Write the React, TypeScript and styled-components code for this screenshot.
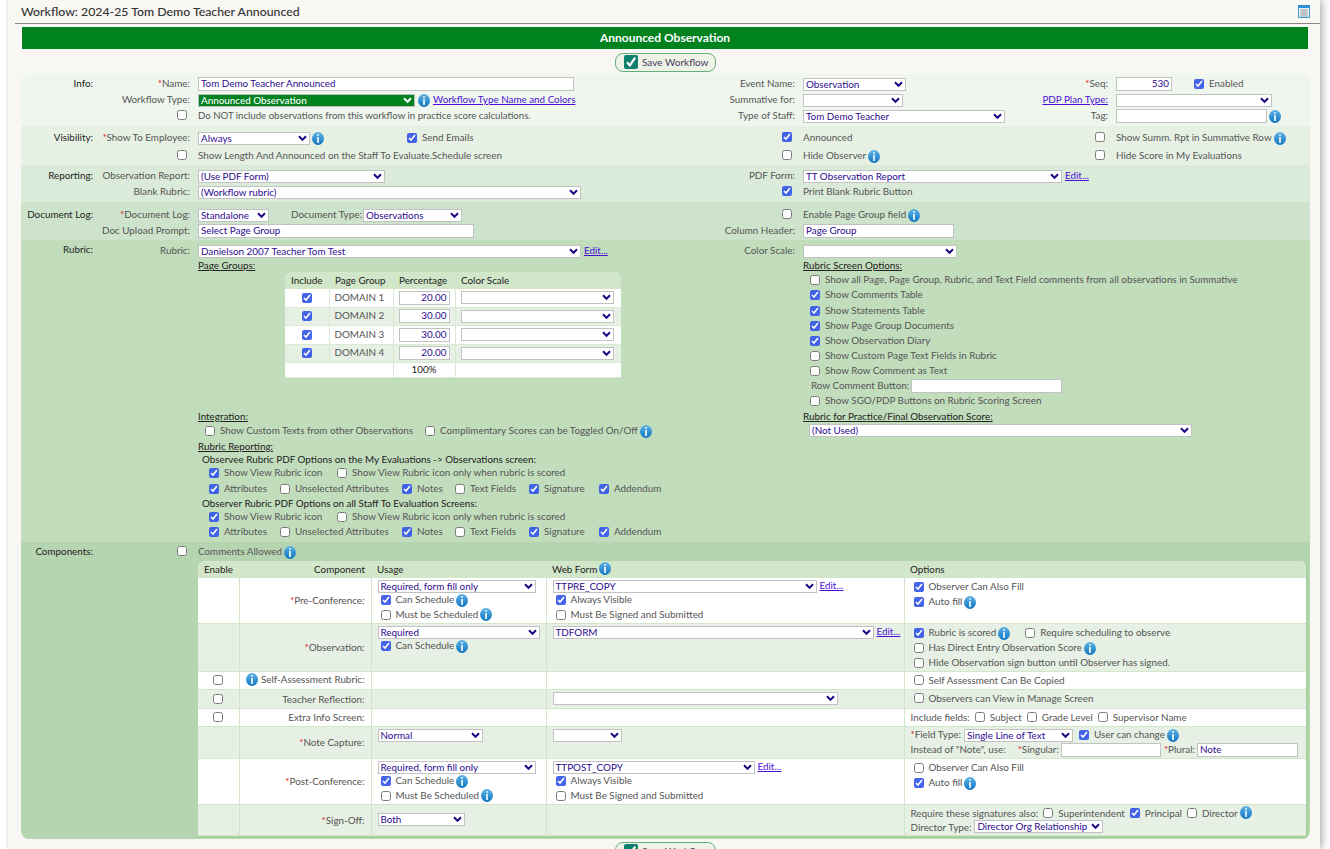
import React from "react";
import styled, { createGlobalStyle } from "styled-components";

const Global = createGlobalStyle`
  html, body { margin: 0; padding: 0; height: 849px; overflow: hidden; background: #fff; }
  body { font-family: Lato, "Liberation Sans", sans-serif; font-size: 9.85px; color: #555; }
`;

const Page = styled.div`
  margin-left: 8px; width: 1312px; height: 849px; background: #f8f7f3;
  box-shadow: 3px 0 7px rgba(0,0,0,.28), -1px 0 3px rgba(0,0,0,.06); overflow: hidden; padding-left: 13px; box-sizing: border-box;
`;
const TitleBar = styled.div`
  display: flex; align-items: center; justify-content: space-between; height: 23px;
  margin: 0 -2px 0 -6px; padding: 0 12px 0 6px; border-bottom: 1px solid #888; box-sizing: content-box;
  font-size: 12.3px; color: #333; font-weight: 500;
`;
const GreenHeader = styled.div`
  margin: 3px 0 0 1px; width: 1286px; height: 22px; background: #00821e; color: #fff; font-weight: 700; font-size: 12px;
  display: flex; align-items: center; justify-content: center; padding-bottom: 1px; box-sizing: border-box;
`;
const SaveRow = styled.div`display: flex; justify-content: center; margin: 4px 0 2px; width: 1289px;`;
const SaveButton = styled.button`
  display: inline-flex; align-items: center; gap: 4px; width: 101px; height: 19px; border: 1px solid #68ad7c; border-radius: 8px;
  background: #eef3e6; color: #443a63; font: inherit; font-size: 10px; padding: 0 0 1px 8px; flex: none;
`;
const Panel = styled.div`width: 1289px; border-radius: 8px; overflow: hidden;`;
const Section = styled.section<{ $bg: string; $pt: number; $pb: number }>`
  display: grid; grid-template-columns: 72px 105px 532px 73px 239px 74px 194px;
  background: ${p => p.$bg}; padding: ${p => p.$pt}px 0 ${p => p.$pb}px; align-items: center;
`;
const Sec = styled.div<{ $top?: boolean }>`
  text-align: right; color: #222; white-space: nowrap; align-self: ${p => (p.$top ? "start" : "center")};
  padding-bottom: 2px;
`;
const Lab = styled.div<{ $pr?: number; $top?: boolean }>`
  display: flex; align-items: center; justify-content: flex-end; padding: 0 ${p => p.$pr ?? 8}px 2px 0; white-space: nowrap;
  align-self: ${p => (p.$top ? "start" : "center")}; height: ${p => (p.$top ? "16px" : "auto")}; box-sizing: border-box;
`;
const Cell = styled.div<{ $h: number; $span?: string }>`
  display: flex; align-items: center; height: ${p => p.$h}px; white-space: nowrap; min-width: 0;
  grid-column: ${p => p.$span ?? "auto"};
`;
const Col = styled.div<{ $span?: string }>`grid-column: ${p => p.$span ?? "auto"}; align-self: start; min-width: 0;`;
const Line = styled.div<{ $h?: number; $ml?: number; $mt?: number }>`
  display: flex; align-items: center; height: ${p => p.$h ?? 15}px; margin-left: ${p => p.$ml ?? 0}px;
  margin-top: ${p => p.$mt ?? 0}px; white-space: nowrap;
`;
const Txt = styled.span<{ $fs?: number }>`
  display: block; margin-bottom: 2px; ${p => (p.$fs ? `font-size: ${p.$fs}px;` : "")}
`;
const Heading = styled.div<{ $h: number; $mt?: number }>`
  height: ${p => p.$h}px; line-height: ${p => p.$h - 1}px; margin-top: ${p => p.$mt ?? 0}px; color: #222; text-decoration: underline;
`;
const SubHead = styled.div<{ $h: number }>`height: ${p => p.$h}px; line-height: ${p => p.$h - 1}px; margin-left: 4px; color: #222;`;
const Star = styled.span`color: #e01b1b;`;
const A = styled.a`color: #4a10d8; text-decoration: underline; margin-left: 3px;`;

const SelBox = styled.div<{ $w: number; $green?: boolean }>`
  position: relative; width: ${p => p.$w}px; height: 13px; flex: none; box-sizing: border-box; padding: 0 14px 0 2px;
  border: 1px solid ${p => (p.$green ? "#bdbdbd" : "#c2c2c2")};
  background: ${p => (p.$green ? "#00821e" : "#fff")}; color: ${p => (p.$green ? "#fff" : "#2c0a8f")}; font-weight: ${p => (p.$green ? 500 : 400)};
  line-height: 10px; text-align: left; white-space: nowrap;
`;
const Chevron = styled.svg`position: absolute; right: 2px; top: 2px; pointer-events: none;`;
const TextIn = styled.input<{ $w: number; $right?: boolean }>`
  width: ${p => p.$w}px; height: 14px; box-sizing: border-box; border: 1px solid #c2c2c2; padding: 0 2px 2px; margin: 0; font: inherit; flex: none;
  color: #2c0a8f; background: #fff; text-align: ${p => (p.$right ? "right" : "left")}; border-radius: 0;
`;
const Box = styled.input`width: 10px; height: 10px; margin: 0; accent-color: #3a5ce8; flex: none; opacity: .95;`;
const CheckWrap = styled.label<{ $w?: number; $mr?: number }>`
  display: inline-flex; align-items: center; gap: 5px; flex: none; margin-right: ${p => p.$mr ?? 0}px;
  width: ${p => (p.$w ? `${p.$w}px` : "auto")};
`;
const InfoDot = styled.svg<{ $ml?: number }>`flex: none; margin-left: ${p => p.$ml ?? 2}px;`;
const Spacer = styled.span<{ $w: number }>`display: inline-block; width: ${p => p.$w}px; flex: none;`;

const Sel = ({ w, v = "", green }: { w: number; v?: string; green?: boolean }) => (
  <SelBox $w={w} $green={green} role="combobox">
    {v}
    <Chevron width="9" height="7" viewBox="0 0 9 7">
      <path d="M1 1.2 L4.5 4.8 L8 1.2" fill="none" stroke={green ? "#fff" : "#1e0a86"} strokeWidth="2" />
    </Chevron>
  </SelBox>
);
const Info = ({ ml }: { ml?: number }) => (
  <InfoDot $ml={ml} width="12" height="13" viewBox="0 0 12 13">
    <defs>
      <linearGradient id="ig" x1="0" y1="0" x2="0" y2="1">
        <stop offset="0" stopColor="#5fb4e6" /><stop offset="1" stopColor="#0f74c0" />
      </linearGradient>
    </defs>
    <ellipse cx="6" cy="6.5" rx="6" ry="6.5" fill="url(#ig)" />
    <rect x="5.2" y="2.2" width="1.6" height="1.6" fill="#fff" />
    <rect x="5.2" y="5" width="1.6" height="6" fill="#fff" />
  </InfoDot>
);
const Check = ({ on, children, w, mr }: { on?: boolean; children?: React.ReactNode; w?: number; mr?: number }) => (
  <CheckWrap $w={w} $mr={mr}>
    <Box type="checkbox" defaultChecked={!!on} />
    {children ? <Txt>{children}</Txt> : null}
  </CheckWrap>
);
const Req = ({ children }: { children: React.ReactNode }) => (<span><Star>*</Star>{children}</span>);
const ReqT = ({ children }: { children: React.ReactNode }) => (<Txt><Star>*</Star>{children}</Txt>);

const Inner = styled.div`
  margin-left: 87px; width: 336px; margin-top: 0; border-radius: 8px 8px 0 0; overflow: hidden;
`;
const PgTable = styled.table`border-collapse: collapse; table-layout: fixed; width: 336px; background: #fff;`;
const PgHead = styled.th<{ $w: number }>`
  width: ${p => p.$w}px; height: 17px; padding: 0 0 2px 6px; background: #d2e7c9; color: #222; font-weight: 400; text-align: left; box-sizing: border-box;
`;
const PgRow = styled.tr<{ $alt?: boolean; $h: number }>`height: ${p => p.$h}px; background: ${p => (p.$alt ? "#e6f0e4" : "#fff")};`;
const PgCell = styled.td<{ $c?: boolean; $strong?: boolean }>`
  padding: 0 0 0 ${p => (p.$c ? 0 : 5)}px; border-left: 1px solid #d9ead3; border-bottom: 1px solid #d9ead3; text-align: ${p => (p.$c ? "center" : "left")};
  color: ${p => (p.$strong ? "#222" : "#555")};
  &:first-child { border-left: none; }
`;
const CellFlex = styled.div`display: flex; align-items: center; justify-content: center;`;

const CompWrap = styled.div`
  grid-column: 3 / 8; width: 1110px; border-radius: 8px 8px 0 0; overflow: hidden; box-sizing: border-box;
  border-right: 2px solid #a7d09f; border-bottom: 2px solid #a7d09f;
`;
const CompTable = styled.table`border-collapse: collapse; table-layout: fixed; width: 1108px; background: #fff;`;
const CompHead = styled.th<{ $w: number; $right?: boolean }>`
  width: ${p => p.$w}px; height: 17px; background: #d2e7c9; color: #222; font-weight: 400; box-sizing: border-box;
  padding: 0 6px 1px; text-align: ${p => (p.$right ? "right" : "left")};
`;
const HeadIn = styled.span`display: inline-flex; align-items: center;`;
const Tr = styled.tr<{ $alt?: boolean; $h: number }>`height: ${p => p.$h}px; background: ${p => (p.$alt ? "#e6f0e4" : "#fff")};`;
const Td = styled.td<{ $mid?: boolean }>`
  padding: 0 0 0 6px; vertical-align: ${p => (p.$mid ? "middle" : "top")}; border-left: 1px solid #d2e7c9; border-bottom: 1px solid #d2e7c9; white-space: nowrap;
  &:first-child { border-left: none; }
  ${p => (p.$mid ? `& ${Txt} { margin-bottom: 0; }` : "")}
`;
const EnableTd = styled(Td)`padding: 0; text-align: center;`;
const CompLabel = styled(Td)`text-align: right; padding: 0 6px 0 0;`;
const CompLabelIn = styled.span`display: inline-flex; align-items: center; gap: 3px;`;
const Stack = styled.div<{ $pt?: number; $pl?: number }>`padding-top: ${p => p.$pt ?? 0}px; padding-left: ${p => p.$pl ?? 0}px;`;
const Bottom = styled.div`display: flex; justify-content: center; margin-top: 3px; width: 1289px;`;

const SaveIcon = () => (
  <svg width="14" height="14" viewBox="0 0 14 14">
    <rect width="14" height="14" rx="2" fill="#0f7f6e" />
    <path d="M3 7.2 L5.8 10.4 L11.2 2.6" fill="none" stroke="#fff" strokeWidth="2.2" />
  </svg>
);

const Pg = [["DOMAIN 1", "20.00", 18, false], ["DOMAIN 2", "30.00", 18, true], ["DOMAIN 3", "30.00", 19, false], ["DOMAIN 4", "20.00", 18, true]] as const;

const PdfOptions = ({ h }: { h: number }) => (
  <>
    <Line $ml={11}><Check on w={128}>Show View Rubric icon</Check><Check>Show View Rubric icon only when rubric is scored</Check></Line>
    <Line $ml={11} $h={h}>
      <Check on w={71}>Attributes</Check><Check w={122}>Unselected Attributes</Check><Check on w={53}>Notes</Check>
      <Check w={74}>Text Fields</Check><Check on w={70}>Signature</Check><Check on>Addendum</Check>
    </Line>
  </>
);

export default function App() {
  return (
    <Page>
      <Global />
      <TitleBar>
        <span>Workflow: 2024-25 Tom Demo Teacher Announced</span>
        <svg width="12" height="13" viewBox="0 0 12 13">
          <rect x=".5" y=".5" width="11" height="12" fill="#e8eef2" stroke="#3f9bd6" />
          <rect x="0" y="0" width="12" height="3" fill="#2f8fd4" />
          <path d="M2 5h8M2 7h8M2 9h8M2 11h8M4 4v8M6 4v8M8 4v8" stroke="#9aa5ad" strokeWidth=".7" />
        </svg>
      </TitleBar>
      <GreenHeader>Announced Observation</GreenHeader>
      <SaveRow><SaveButton><SaveIcon />Save Workflow</SaveButton></SaveRow>
      <Panel>
        <Section $bg="#eff6ee" $pt={2} $pb={2}>
          <Sec>Info:</Sec><Lab><Req>Name:</Req></Lab>
          <Cell $h={16}><TextIn $w={376} defaultValue="Tom Demo Teacher Announced" /></Cell>
          <Lab>Event Name:</Lab><Cell $h={16}><Sel w={103} v="Observation" /></Cell>
          <Lab><Req>Seq:</Req></Lab>
          <Cell $h={16}><TextIn $w={56} $right defaultValue="530" /><Spacer $w={22} /><Check on>Enabled</Check></Cell>

          <Sec /><Lab>Workflow Type:</Lab>
          <Cell $h={16}><Sel w={217} green v="Announced Observation" /><Info ml={3} /><Txt><A>Workflow Type Name and Colors</A></Txt></Cell>
          <Lab>Summative for:</Lab><Cell $h={16}><Sel w={100} /></Cell>
          <Lab><A>PDP Plan Type:</A></Lab><Cell $h={16}><Sel w={156} /></Cell>

          <Sec /><Lab $pr={11}><Box type="checkbox" /></Lab>
          <Cell $h={16}><Txt $fs={9.65}>Do NOT include observations from this workflow in practice score calculations.</Txt></Cell>
          <Lab>Type of Staff:</Lab><Cell $h={16}><Sel w={202} v="Tom Demo Teacher" /></Cell>
          <Lab>Tag:</Lab><Cell $h={16}><TextIn $w={151} /><Info /></Cell>
        </Section>

        <Section $bg="#e6f1e4" $pt={3} $pb={0}>
          <Sec>Visibility:</Sec><Lab><Req>Show To Employee:</Req></Lab>
          <Cell $h={18}><Sel w={112} v="Always" /><Info /><Spacer $w={83} /><Check on>Send Emails</Check></Cell>
          <Lab $pr={11}><Box type="checkbox" defaultChecked /></Lab><Cell $h={18}><Txt>Announced</Txt></Cell>
          <Lab $pr={11}><Box type="checkbox" /></Lab><Cell $h={18}><Txt>Show Summ. Rpt in Summative Row</Txt><Info /></Cell>

          <Sec /><Lab $pr={11}><Box type="checkbox" /></Lab>
          <Cell $h={18}><Txt>Show Length And Announced on the Staff To Evaluate.Schedule screen</Txt></Cell>
          <Lab $pr={11}><Box type="checkbox" /></Lab><Cell $h={18}><Txt>Hide Observer</Txt><Info /></Cell>
          <Lab $pr={11}><Box type="checkbox" /></Lab><Cell $h={18}><Txt>Hide Score in My Evaluations</Txt></Cell>
        </Section>

        <Section $bg="#dbebd9" $pt={3} $pb={2}>
          <Sec>Reporting:</Sec><Lab>Observation Report:</Lab>
          <Cell $h={16}><Sel w={187} v="(Use PDF Form)" /></Cell>
          <Lab>PDF Form:</Lab><Cell $h={16}><Sel w={259} v="TT Observation Report" /><Txt><A>Edit...</A></Txt></Cell><Lab /><Cell $h={16} />

          <Sec /><Lab>Blank Rubric:</Lab>
          <Cell $h={16}><Sel w={383} v="(Workflow rubric)" /></Cell>
          <Lab $pr={11}><Box type="checkbox" defaultChecked /></Lab><Cell $h={16}><Txt>Print Blank Rubric Button</Txt></Cell><Lab /><Cell $h={16} />
        </Section>

        <Section $bg="#cde3cb" $pt={5} $pb={1}>
          <Sec>Document Log:</Sec><Lab><Req>Document Log:</Req></Lab>
          <Cell $h={16}><Sel w={71} v="Standalone" /><Spacer $w={22} /><Txt>Document Type:</Txt><Spacer $w={1} /><Sel w={99} v="Observations" /></Cell>
          <Lab $pr={11}><Box type="checkbox" /></Lab><Cell $h={16}><Txt>Enable Page Group field</Txt><Info /></Cell><Lab /><Cell $h={16} />

          <Sec /><Lab>Doc Upload Prompt:</Lab>
          <Cell $h={16}><TextIn $w={276} defaultValue="Select Page Group" /></Cell>
          <Lab>Column Header:</Lab><Cell $h={16}><TextIn $w={151} defaultValue="Page Group" /></Cell><Lab /><Cell $h={16} />
        </Section>

        <Section $bg="#c1ddbc" $pt={3} $pb={2}>
          <Sec $top>Rubric:</Sec>
          <Lab $top>Rubric:</Lab>
          <Col>
            <Cell $h={16}><Sel w={383} v="Danielson 2007 Teacher Tom Test" /><Txt><A>Edit...</A></Txt></Cell>
            <Heading $h={13}>Page Groups:</Heading>
            <Inner>
              <PgTable>
                <thead><tr>
                  <PgHead $w={44}>Include</PgHead><PgHead $w={64}>Page Group</PgHead><PgHead $w={62}>Percentage</PgHead><PgHead $w={166}>Color Scale</PgHead>
                </tr></thead>
                <tbody>
                  {Pg.map(([n, v, h, alt]) => (
                    <PgRow key={n} $h={h} $alt={alt}>
                      <PgCell $c><CellFlex><Box type="checkbox" defaultChecked /></CellFlex></PgCell>
                      <PgCell><Txt>{n}</Txt></PgCell>
                      <PgCell><TextIn $w={51} $right defaultValue={v} /></PgCell>
                      <PgCell><Sel w={153} /></PgCell>
                    </PgRow>
                  ))}
                  <PgRow $h={15}>
                    <PgCell colSpan={2} /><PgCell $c $strong><Txt>100%</Txt></PgCell><PgCell />
                  </PgRow>
                </tbody>
              </PgTable>
            </Inner>
            <Heading $h={14} $mt={32}>Integration:</Heading>
            <Line $h={15} $ml={7}><Check w={220}>Show Custom Texts from other Observations</Check><Check>Complimentary Scores can be Toggled On/Off</Check><Info /></Line>
            <Heading $h={15}>Rubric Reporting:</Heading>
            <SubHead $h={12}>Observee Rubric PDF Options on the My Evaluations -&gt; Observations screen:</SubHead>
            <PdfOptions h={16} />
            <SubHead $h={13}>Observer Rubric PDF Options on all Staff To Evaluation Screens:</SubHead>
            <PdfOptions h={15} />
          </Col>
          <Lab $top>Color Scale:</Lab>
          <Col $span="5 / 8">
            <Cell $h={16}><Sel w={154} /></Cell>
            <Heading $h={13}>Rubric Screen Options:</Heading>
            <Line $ml={7}><Check>Show all Page, Page Group, Rubric, and Text Field comments from all observations in Summative</Check></Line>
            <Line $ml={7}><Check on>Show Comments Table</Check></Line>
            <Line $ml={7} $mt={1}><Check on>Show Statements Table</Check></Line>
            <Line $ml={7}><Check on>Show Page Group Documents</Check></Line>
            <Line $ml={7}><Check on>Show Observation Diary</Check></Line>
            <Line $ml={7}><Check>Show Custom Page Text Fields in Rubric</Check></Line>
            <Line $ml={7}><Check>Show Row Comment as Text</Check></Line>
            <Line $ml={8}><Txt>Row Comment Button:</Txt><Spacer $w={2} /><TextIn $w={151} /></Line>
            <Line $ml={7}><Check>Show SGO/PDP Buttons on Rubric Scoring Screen</Check></Line>
            <Heading $h={17}>Rubric for Practice/Final Observation Score:</Heading>
            <Line $ml={6} $h={11}><Sel w={383} v="(Not Used)" /></Line>
          </Col>
        </Section>

        <Section $bg="#b5d5b0" $pt={2} $pb={1}>
          <Sec>Components:</Sec><Lab $pr={11}><Box type="checkbox" /></Lab>
          <Cell $h={17} $span="3 / 8"><Txt>Comments Allowed</Txt><Info /></Cell>
          <CompWrap>
            <CompTable>
              <thead><tr>
                <CompHead $w={41}>Enable</CompHead><CompHead $w={132} $right>Component</CompHead><CompHead $w={175}>Usage</CompHead>
                <CompHead $w={358}><HeadIn>Web Form<Info /></HeadIn></CompHead><CompHead $w={402}>Options</CompHead>
              </tr></thead>
              <tbody>
                <Tr $h={45}>
                  <EnableTd /><CompLabel $mid><ReqT>Pre-Conference:</ReqT></CompLabel>
                  <Td><Line $mt={1}><Sel w={158} v="Required, form fill only" /></Line><Line $h={13} $ml={3}><Check on>Can Schedule</Check><Info /></Line><Line $h={16} $ml={3}><Check>Must be Scheduled</Check><Info /></Line></Td>
                  <Td><Line $mt={1}><Sel w={264} v="TTPRE_COPY" /><Txt><A>Edit...</A></Txt></Line><Line $h={13} $ml={3}><Check on>Always Visible</Check></Line><Line $h={16} $ml={3}><Check>Must Be Signed and Submitted</Check></Line></Td>
                  <Td><Stack $pt={2} $pl={3}><Line><Check on>Observer Can Also Fill</Check></Line><Line><Check on>Auto fill</Check><Info /></Line></Stack></Td>
                </Tr>
                <Tr $h={48} $alt>
                  <EnableTd /><CompLabel $mid><ReqT>Observation:</ReqT></CompLabel>
                  <Td><Line $mt={1}><Sel w={162} v="Required" /></Line><Line $h={13} $ml={3}><Check on>Can Schedule</Check><Info /></Line></Td>
                  <Td><Line $mt={1}><Sel w={321} v="TDFORM" /><Txt><A>Edit...</A></Txt></Line></Td>
                  <Td><Stack $pt={2} $pl={3}>
                    <Line><Check on>Rubric is scored</Check><Info /><Spacer $w={15} /><Check>Require scheduling to observe</Check></Line>
                    <Line><Check>Has Direct Entry Observation Score</Check><Info /></Line>
                    <Line><Check>Hide Observation sign button until Observer has signed.</Check></Line>
                  </Stack></Td>
                </Tr>
                <Tr $h={18}>
                  <EnableTd $mid><CellFlex><Box type="checkbox" /></CellFlex></EnableTd>
                  <CompLabel $mid><CompLabelIn><Info /><Txt>Self-Assessment Rubric:</Txt></CompLabelIn></CompLabel>
                  <Td /><Td /><Td $mid><Stack $pl={3}><Check>Self Assessment Can Be Copied</Check></Stack></Td>
                </Tr>
                <Tr $h={19} $alt>
                  <EnableTd $mid><CellFlex><Box type="checkbox" /></CellFlex></EnableTd>
                  <CompLabel $mid><Txt>Teacher Reflection:</Txt></CompLabel>
                  <Td /><Td $mid><Line><Sel w={285} /></Line></Td><Td $mid><Stack $pl={3}><Check>Observers can View in Manage Screen</Check></Stack></Td>
                </Tr>
                <Tr $h={18}>
                  <EnableTd $mid><CellFlex><Box type="checkbox" /></CellFlex></EnableTd>
                  <CompLabel $mid><Txt>Extra Info Screen:</Txt></CompLabel>
                  <Td /><Td />
                  <Td $mid><Line><Txt>Include fields:</Txt><Spacer $w={5} /><Check mr={5}>Subject</Check><Check mr={5}>Grade Level</Check><Check>Supervisor Name</Check></Line></Td>
                </Tr>
                <Tr $h={32} $alt>
                  <EnableTd /><CompLabel $mid><ReqT>Note Capture:</ReqT></CompLabel>
                  <Td><Line $mt={1}><Sel w={105} v="Normal" /></Line></Td>
                  <Td><Line $mt={1}><Sel w={69} /></Line></Td>
                  <Td><Stack $pt={1}>
                    <Line><ReqT>Field Type:</ReqT><Spacer $w={3} /><Sel w={109} v="Single Line of Text" /><Spacer $w={6} /><Check on>User can change</Check><Info /></Line>
                    <Line><Txt>Instead of "Note", use:</Txt><Spacer $w={12} /><ReqT>Singular:</ReqT><Spacer $w={2} /><TextIn $w={100} /><Spacer $w={3} /><ReqT>Plural:</ReqT><Spacer $w={2} /><TextIn $w={101} defaultValue="Note" /></Line>
                  </Stack></Td>
                </Tr>
                <Tr $h={46}>
                  <EnableTd /><CompLabel $mid><ReqT>Post-Conference:</ReqT></CompLabel>
                  <Td><Line $mt={1}><Sel w={158} v="Required, form fill only" /></Line><Line $h={13} $ml={3}><Check on>Can Schedule</Check><Info /></Line><Line $h={16} $ml={3}><Check>Must Be Scheduled</Check><Info /></Line></Td>
                  <Td><Line $mt={1}><Sel w={202} v="TTPOST_COPY" /><Txt><A>Edit...</A></Txt></Line><Line $h={13} $ml={3}><Check on>Always Visible</Check></Line><Line $h={16} $ml={3}><Check>Must Be Signed and Submitted</Check></Line></Td>
                  <Td><Stack $pt={2} $pl={3}><Line><Check>Observer Can Also Fill</Check></Line><Line><Check on>Auto fill</Check><Info /></Line></Stack></Td>
                </Tr>
                <Tr $h={31} $alt>
                  <EnableTd /><CompLabel $mid><ReqT>Sign-Off:</ReqT></CompLabel>
                  <Td $mid><Line><Sel w={87} v="Both" /></Line></Td><Td />
                  <Td $mid>
                    <Line $h={14}><Txt>Require these signatures also:</Txt><Spacer $w={5} /><Check mr={5}>Superintendent</Check><Check on mr={5}>Principal</Check><Check>Director</Check><Info /></Line>
                    <Line $h={14}><Txt>Director Type:</Txt><Spacer $w={3} /><Sel w={129} v="Director Org Relationship" /></Line>
                  </Td>
                </Tr>
              </tbody>
            </CompTable>
          </CompWrap>
        </Section>
      </Panel>
      <Bottom><SaveButton><SaveIcon />Save Workflow</SaveButton></Bottom>
    </Page>
  );
}
